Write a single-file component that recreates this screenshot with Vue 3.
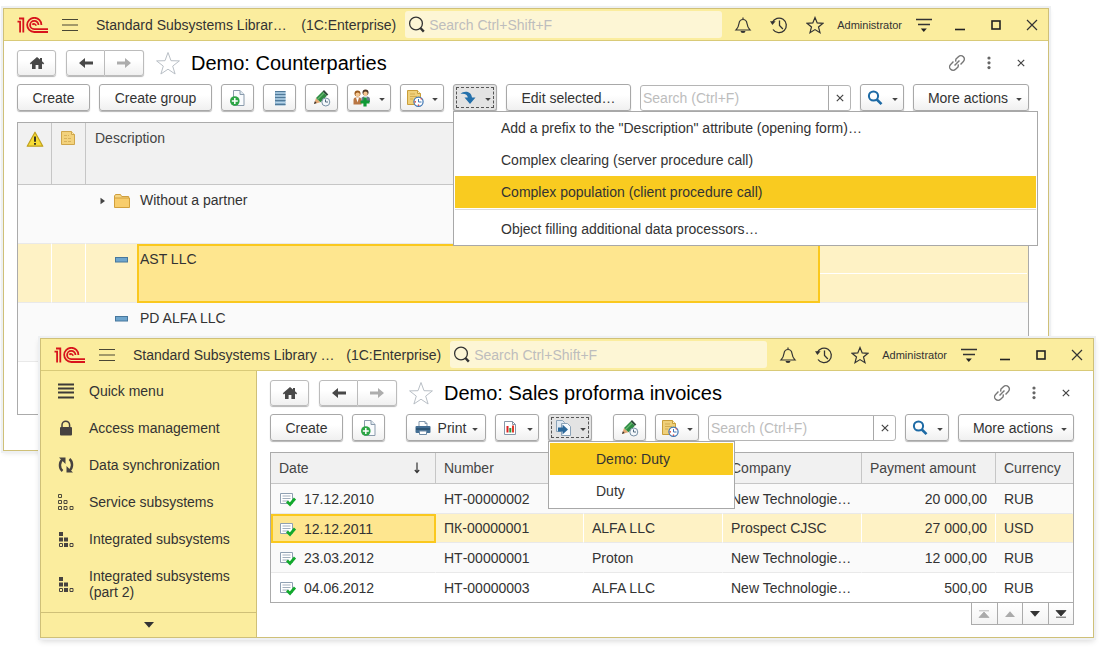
<script setup>
import { h } from 'vue'

const shapes = {
  logo: [32, 16, '<g fill="none" stroke="#d8141c" stroke-width="1.800"><path d="M.5 4.600h2.600V15.500M2 1.500h4.300V15.500"/><path d="M24.400 8a7.100 7.100 0 1 0-7.100 7H31M21.500 8a4.200 4.200 0 1 0-4.200 4.200H31M18.900 8.800a1.900 1.900 0 0 0-3.500-1"/></g>'],
  burger: [16, 14, '<path d="M0 1.500h16M0 7h16M0 12.500h16" stroke="#4a4735" stroke-width="1.2"/>'],
  lens: [18, 18, '<circle cx="8" cy="7.5" r="6.4" fill="none" stroke="#333" stroke-width="1.3"/><path d="M12.4 12l3.4 3.6" stroke="#333" stroke-width="2.4"/>'],
  bell: [18, 18, '<path d="M2 14h14c-2-2-2.6-3.400-3-6.500C12.600 4.500 11.200 3.500 9 3.500S5.400 4.500 5 7.500C4.600 10.600 4 12 2 14zM9 3.500V1.500" fill="none" stroke="#333" stroke-width="1.2"/><path d="M6.500 15h5a2.500 2 0 0 1-5 0z" fill="#333"/>'],
  history: [18, 18, '<path d="M2.300 6.500A7.300 7.300 0 1 1 3 13.500M9.500 4.500v5l3.400 3.500" fill="none" stroke="#333" stroke-width="1.3"/><path d="M0 5.200h5.600L2.400 9z" fill="#333"/>'],
  star: [18, 18, '<path d="M9 1.500l2.200 5.400 5.800.4-4.500 3.700 1.500 5.700L9 13.600l-5 3.100 1.500-5.700L1 7.300l5.800-.4z" fill="none" stroke="#333" stroke-width="1.200"/>'],
  settings: [16, 16, '<path d="M0 2.500h16M2 7.500h12" stroke="#333" stroke-width="1.300"/><path d="M4.800 11.500h6L7.800 15z" fill="#222"/>'],
  minimize: [12, 16, '<path d="M1 12.500h10" stroke="#222" stroke-width="1.600"/>'],
  maximize: [12, 12, '<rect x="2" y="2" width="8" height="8" fill="none" stroke="#222" stroke-width="1.600"/>'],
  close: [12, 12, '<path d="M1 1l10 10M11 1L1 11" stroke="#333" stroke-width="1.200"/>'],
  home: [16, 14, '<path d="M8 1L.8 7.200l1.100 1.300L3 7.600V13h3.600V9h2.800v4H13V7.600l1.100.9 1.100-1.300-2.200-1.900V2h-2v1.600z" fill="#484848"/>'],
  back: [16, 12, '<path d="M1 6l6-5v3.500h8v3H7V11z" fill="#484848"/>'],
  forward: [16, 12, '<path d="M15 6L9 1v3.500H1v3h8V11z" fill="#adadad"/>'],
  bigstar: [26, 24, '<path d="M13 1.500l3 8.200 8.400.200-6.700 5.200 2.400 7.900L13 18.200 5.900 23l2.400-7.900L1.600 9.900l8.400-.2z" fill="#fff" stroke="#b9bfc6" stroke-width="1"/>'],
  link: [18, 18, '<g fill="none" stroke="#777" stroke-width="1.400" transform="rotate(-45 9 9)"><path d="M7.500 5.500H3.500a3.500 3.500 0 0 0 0 7h3.500l2-1.500M10.500 12.500h4a3.500 3.500 0 0 0 0-7H11L9 7M5.500 9h7"/></g>'],
  dots: [6, 14, '<g fill="#666"><circle cx="3" cy="2" r="1.600"/><circle cx="3" cy="6.800" r="1.600"/><circle cx="3" cy="11.600" r="1.600"/></g>'],
  cross: [8, 8, '<path d="M.8.8l6.400 6.400M7.200.8L.8 7.200" stroke="#444" stroke-width="1.200"/>'],
  caret: [6, 8, '<path d="M.2 4h5.600L3 7z" fill="#444"/>'],
  addDoc: [18, 18, '<path d="M4.500 1.500h6.500l4 4v11H4.500z" fill="#f9fbfd" stroke="#8a9bac"/><path d="M11 1.500v4h4" fill="#dfe8f0" stroke="#8a9bac"/><circle cx="5.800" cy="12" r="4.800" fill="#2ba544"/><path d="M5.800 9v6M2.800 12h6" stroke="#fff" stroke-width="1.500"/>'],
  list: [18, 18, '<rect x="4" y="2" width="10.500" height="14.500" fill="#84acc9"/><path d="M4 2.500h10.500M4 5.500h10.500M4 8.500h10.500M4 11.500h10.500M4 15.500h10.500" stroke="#517a99"/><path d="M4.500 4h9.500M4.500 7h9.500M4.500 10h9.500M4.500 13.500h9.500" stroke="#b8d4e8"/>'],
  pencil: [18, 18, '<path d="M1 15l2-6 4.500 4.200z" fill="#e3a875"/><path d="M1 15l.9-2.700 1.800 1.700z" fill="#333"/><path d="M3 9L9.500 2.400l4.400 4.300L7.500 13.200z" fill="#2e8b43"/><path d="M9.500 2.400L11 1l4.300 4.400-1.400 1.300z" fill="#2f4a3a"/><path d="M4.500 10.500L11 4" stroke="#65b96f" stroke-width="1.300"/><circle cx="12.800" cy="13" r="4" fill="#f4f8fb" stroke="#7890a5"/><path d="M12.500 10.500V13h2.500" fill="none" stroke="#506a80"/>'],
  people: [18, 18, '<circle cx="4.500" cy="4.500" r="3" fill="#9a5a1e"/><circle cx="4.700" cy="5.600" r="2.200" fill="#f6c791"/><path d="M.5 15.500V11c0-2 1.500-2.700 4-2.700s4 .7 4 2.700v4.500z" fill="#b97643"/><path d="M3 8.500h3l-1.500 5z" fill="#fff"/><circle cx="12.500" cy="3.500" r="3" fill="#4a3324"/><circle cx="12.500" cy="4.800" r="2.200" fill="#f6c791"/><path d="M8.500 13V9.500c0-1.500 1.500-2 4-2s4.500.5 4.500 2.500V13z" fill="#6a7a8c"/><path d="M11 7.500h3l-1.500 4z" fill="#fff"/><path d="M12 8.500v9M7.500 13h9" stroke="#0f9a35" stroke-width="3.200"/>'],
  noteClock: [18, 18, '<path d="M1.500 1.500h10l3 3v11h-13z" fill="#efd07a" stroke="#c99e3a"/><path d="M11.500 1.500v3h3" fill="#fff0b8" stroke="#c99e3a"/><path d="M4 5h5M4 7.500h7M4 10h3" stroke="#d3ac50"/><circle cx="12.500" cy="12.800" r="4.600" fill="#fff" stroke="#3e76b4" stroke-width="1.200"/><path d="M12.500 10v3h3" fill="none" stroke="#3e76b4"/><path d="M8.500 12.800h1.500M12.500 16.800v-1.300M15.500 9.500l-.7.800" stroke="#d32f2f" stroke-width="1.300"/>'],
  turn: [18, 18, '<path d="M1.500 4.800C4.500 1.800 12 1.500 13 8.500h3.500L11 15 5.500 8.500h3.300C8.500 5.500 6 4.200 1.500 4.800z" fill="#2470ab"/>'],
  find: [18, 18, '<circle cx="7.500" cy="7" r="4.600" fill="none" stroke="#1d6aa5" stroke-width="2"/><path d="M10.800 10.500l4.700 4.700" stroke="#1d6aa5" stroke-width="2.600"/>'],
  print: [18, 18, '<path d="M5 2.500h6l2 2V8H5z" fill="#fff" stroke="#8499ad"/><path d="M11 2.500v2h2" fill="none" stroke="#8499ad"/><rect x="1.500" y="7" width="15" height="7" rx="1" fill="#446f94"/><path d="M2 10h14" stroke="#29506f" stroke-width="1.600"/><path d="M5.500 12h7v3.500h-7z" fill="#fff" stroke="#6d8aa5"/>'],
  chart: [18, 18, '<path d="M3.500 2.500h8l3 3v10h-11z" fill="#fff" stroke="#8797a8"/><path d="M11.500 2.500v3h3" fill="none" stroke="#8797a8"/><path d="M6.500 7v6.500" stroke="#d22" stroke-width="2"/><path d="M9.300 9v4.500" stroke="#2a9a45" stroke-width="2"/><path d="M12 6.500v7" stroke="#e03a2a" stroke-width="2"/>'],
  based: [18, 18, '<path d="M2.500 1.500h6l2 2v9h-8z" fill="#dfe9f2" stroke="#8ba3b8"/><path d="M7.500 4.500h6l3 3v9h-9z" fill="#f6fafd" stroke="#8ba3b8"/><path d="M4 8.500h4.500V5.500l5.500 5-5.500 5v-3H4z" fill="#2a689b"/>'],
  warn: [18, 18, '<path d="M9 2.200l7.800 14H1.200z" fill="#f6dc35" stroke="#c0a020" stroke-width="1.200" stroke-linejoin="round"/><path d="M9 6.500v5.200M9 13v1.800" stroke="#222" stroke-width="1.800"/>'],
  note: [16, 16, '<path d="M1.500 1.500h10l3 3v10h-13z" fill="#f3d27c" stroke="#cfa64c"/><path d="M11.500 1.500v3h3" fill="#fbe9b0" stroke="#cfa64c"/><path d="M4 5.500h5M4 8.500h8M4 11.500h8" stroke="#d8b25c" stroke-dasharray="3 1"/>'],
  expand: [6, 8, '<path d="M.5.800L5 4 .5 7.200z" fill="#444"/>'],
  folder: [18, 16, '<path d="M1.500 3l1-1.500h5l1.200 2h7v2H1.500z" fill="#f6d684" stroke="#cf9f3e"/><path d="M1.500 5h15v9.500h-15z" fill="#f8cd6c" stroke="#d2a03c"/>'],
  item: [16, 6, '<rect x=".5" y=".5" width="12" height="4.500" fill="#6ea5cd" stroke="#47779c"/>'],
  posted: [18, 16, '<path d="M1.500 2.500h12v10h-12z" fill="#fff" stroke="#8fa0b2"/><path d="M3.500 5h8M3.500 7.500h8M3.500 10h6" stroke="#a2afbd"/><path d="M8 10.500l3 3 5-6" fill="none" stroke="#12a92c" stroke-width="2.800"/>'],
  sort: [8, 12, '<path d="M4 .5v10M1.800 8L4 10.500 6.200 8" fill="none" stroke="#333" stroke-width="1.200"/>'],
  menu: [16, 16, '<path d="M0 1.500h16M0 5.500h16M0 9.500h16M0 14.500h16" stroke="#3d3a38" stroke-width="2"/>'],
  lock: [16, 16, '<path d="M4 8V5a3.800 3.800 0 0 1 7.600 0v3" fill="none" stroke="#464240" stroke-width="1.500"/><rect x="2" y="7" width="12" height="8.500" rx="1" fill="#464240"/>'],
  sync: [16, 16, '<path d="M5 2C1 5 1 11 4.500 14M11 14c4-3 4-9 .5-12" fill="none" stroke="#464240" stroke-width="2.400"/><path d="M1 .500h6.500V7zM15 15.500H8.500V9z" fill="#464240"/>'],
  boxes: [16, 16, '<g fill="none" stroke="#4d4a3c"><path d="M.5.500h3v3h-3zM.5 6.500h3v3h-3zM6 6.500h3v3H6zM.5 12.500h3v3h-3zM6 12.500h3v3H6zM12 12.500h3v3h-3z"/></g>'],
  filled: [16, 16, '<path d="M1 1h4v4H1zM1 6.500h4v4H1zM6 6.500h4v4H6zM6 12h4v4H6z" fill="#464240"/><path d="M1.500 12.500h3v3h-3zM12 12.500h3v3h-3z" fill="none" stroke="#464240"/>'],
  down: [12, 8, '<path d="M1 1h10L6 6.800z" fill="#333"/>'],
  up: [12, 8, '<path d="M1 7h10L6 1.200z" fill="#aaa"/>'],
  first: [12, 8, '<path d="M1 .800h10M1 7.500h10L6 2z" fill="#aaa" stroke="#aaa" stroke-width=".8"/>'],
  last: [12, 8, '<path d="M1 7.200h10M1 .500h10L6 6z" fill="#333" stroke="#333" stroke-width=".8"/>']
}

const Icon = ({ name }) => {
  const [w, ht, body] = shapes[name]
  return h('svg', { width: w, height: ht, viewBox: `0 0 ${w} ${ht}`, 'aria-hidden': 'true', innerHTML: body })
}
Icon.props = ['name']

const windows = [
  {
    id: 'counterparties',
    app: 'Standard Subsystems Librar…',
    heading: 'Demo: Counterparties',
    tools: [
      { label: 'Create', size: 'create' },
      { label: 'Create group', size: 'group' },
      { icon: 'addDoc', hint: 'Create by copying' },
      { icon: 'list', hint: 'List view' },
      { icon: 'pencil', hint: 'Edit' },
      { icon: 'people', caret: true, hint: 'Contacts' },
      { icon: 'noteClock', caret: true, hint: 'Reminders' },
      {
        icon: 'turn', caret: true, hint: 'Fill', active: true, menuClass: 'wide',
        menu: [
          { text: 'Add a prefix to the "Description" attribute (opening form)…' },
          { text: 'Complex clearing (server procedure call)' },
          { text: 'Complex population (client procedure call)', current: true },
          { text: 'Object filling additional data processors…', divided: true }
        ]
      },
      { label: 'Edit selected…', size: 'edit' }
    ]
  },
  {
    id: 'invoices',
    app: 'Standard Subsystems Library …',
    heading: 'Demo: Sales proforma invoices',
    tools: [
      { label: 'Create', size: 'create' },
      { icon: 'addDoc', hint: 'Create by copying' },
      { icon: 'print', label: 'Print', caret: true, size: 'print', lead: true },
      { icon: 'chart', caret: true, hint: 'Reports' },
      {
        icon: 'based', caret: true, hint: 'Create based on', active: true, menuClass: 'narrow',
        menu: [{ text: 'Demo: Duty', current: true }, { text: 'Duty' }]
      },
      { icon: 'pencil', hint: 'Edit', lead: true },
      { icon: 'noteClock', caret: true, hint: 'Reminders' }
    ]
  }
]

const sections = [
  { icon: 'menu', text: 'Quick menu' },
  { icon: 'lock', text: 'Access management' },
  { icon: 'sync', text: 'Data synchronization' },
  { icon: 'boxes', text: 'Service subsystems' },
  { icon: 'filled', text: 'Integrated subsystems' },
  { icon: 'filled', text: 'Integrated subsystems (part 2)' }
]

const invoices = [
  ['17.12.2010', 'НТ-00000002', '', 'New Technologie…', '20 000,00', 'RUB'],
  ['12.12.2011', 'ПК-00000001', 'ALFA LLC', 'Prospect CJSC', '27 000,00', 'USD'],
  ['23.03.2012', 'НТ-00000001', 'Proton', 'New Technologie…', '12 000,00', 'RUB'],
  ['04.06.2012', 'НТ-00000003', 'ALFA LLC', 'New Technologie…', '500,00', 'RUB']
]
</script>

<template>
  <div class="desktop">
    <section v-for="w in windows" :key="w.id" class="window" :class="w.id">
      <header class="titlebar">
        <Icon name="logo" />
        <button class="flat burger" aria-label="Main menu"><Icon name="burger" /></button>
        <span class="app-name">{{ w.app }}</span>
        <span class="platform">(1C:Enterprise)</span>
        <label class="global-search">
          <Icon name="lens" />
          <input type="text" placeholder="Search Ctrl+Shift+F" aria-label="Global search" />
        </label>
        <div class="title-actions">
          <button class="flat" aria-label="Notifications"><Icon name="bell" /></button>
          <button class="flat" aria-label="History"><Icon name="history" /></button>
          <button class="flat" aria-label="Favorites"><Icon name="star" /></button>
          <span class="user">Administrator</span>
          <button class="flat" aria-label="Settings"><Icon name="settings" /></button>
          <button class="flat" aria-label="Minimize"><Icon name="minimize" /></button>
          <button class="flat" aria-label="Maximize"><Icon name="maximize" /></button>
          <button class="flat" aria-label="Close window"><Icon name="close" /></button>
        </div>
      </header>

      <div class="body">
        <nav v-if="w.id === 'invoices'" class="sidebar">
          <ul>
            <li v-for="s in sections" :key="s.text">
              <a href="#"><Icon :name="s.icon" /><span>{{ s.text }}</span></a>
            </li>
          </ul>
          <button class="flat more" aria-label="Scroll down"><Icon name="down" /></button>
        </nav>

        <main class="content">
          <div class="navrow">
            <button class="btn home" aria-label="Home"><Icon name="home" /></button>
            <div class="pair">
              <button class="btn" aria-label="Back"><Icon name="back" /></button>
              <button class="btn" aria-label="Forward"><Icon name="forward" /></button>
            </div>
            <button class="flat fav" aria-label="Add to favorites"><Icon name="bigstar" /></button>
            <h1>{{ w.heading }}</h1>
            <div class="form-actions">
              <button class="flat" aria-label="Copy link"><Icon name="link" /></button>
              <button class="flat" aria-label="More"><Icon name="dots" /></button>
              <button class="flat dismiss" aria-label="Close form"><Icon name="cross" /></button>
            </div>
          </div>

          <div class="toolbar">
            <div v-for="(t, i) in w.tools" :key="i" class="tool" :class="{ lead: t.lead }">
              <button
                class="btn"
                :class="[t.size, { drop: t.caret && !t.label, square: !t.caret && !t.label, active: t.active }]"
                :aria-label="t.hint"
              >
                <Icon v-if="t.icon" :name="t.icon" />
                <span v-if="t.label">{{ t.label }}</span>
                <Icon v-if="t.caret" name="caret" />
              </button>
              <ul v-if="t.menu" class="menu" :class="t.menuClass">
                <li v-for="m in t.menu" :key="m.text" :class="{ divided: m.divided }">
                  <button :class="{ current: m.current }">{{ m.text }}</button>
                </li>
              </ul>
            </div>
            <div class="search">
              <input type="text" placeholder="Search (Ctrl+F)" aria-label="Search in list" />
              <button aria-label="Clear"><Icon name="cross" /></button>
            </div>
            <button class="btn drop" aria-label="Find"><Icon name="find" /><Icon name="caret" /></button>
            <button class="btn actions"><span>More actions</span><Icon name="caret" /></button>
          </div>

          <div v-if="w.id === 'counterparties'" class="grid tree">
            <table>
              <colgroup>
                <col class="c-flag" /><col class="c-note" /><col class="c-mark" /><col /><col class="c-extra" />
              </colgroup>
              <thead>
                <tr>
                  <th class="mid"><Icon name="warn" /></th>
                  <th class="mid"><Icon name="note" /></th>
                  <th colspan="2">Description</th>
                  <th></th>
                </tr>
              </thead>
              <tbody>
                <tr>
                  <td></td><td></td>
                  <td class="mark"><Icon name="expand" /><Icon name="folder" /></td>
                  <td class="name">Without a partner</td><td></td>
                </tr>
                <tr class="selected">
                  <td></td><td></td>
                  <td class="mark"><Icon name="item" /></td>
                  <td class="name focus">AST LLC</td>
                  <td class="halves"><div></div></td>
                </tr>
                <tr>
                  <td></td><td></td>
                  <td class="mark"><Icon name="item" /></td>
                  <td class="name">PD ALFA LLC</td><td></td>
                </tr>
              </tbody>
            </table>
          </div>

          <template v-else>
            <div class="grid flatlist">
              <table>
                <colgroup>
                  <col class="d1" /><col class="d2" /><col class="d3" /><col class="d3" /><col class="d5" /><col />
                </colgroup>
                <thead>
                  <tr>
                    <th><div class="date-head">Date<Icon name="sort" /></div></th>
                    <th>Number</th><th></th><th>Company</th><th>Payment amount</th><th>Currency</th>
                  </tr>
                </thead>
                <tbody>
                  <tr v-for="(r, i) in invoices" :key="r[0]" :class="{ selected: i === 1 }">
                    <td :class="{ focus: i === 1 }"><div class="date"><Icon name="posted" />{{ r[0] }}</div></td>
                    <td>{{ r[1] }}</td>
                    <td>{{ r[2] }}</td>
                    <td>{{ r[3] }}</td>
                    <td class="num">{{ r[4] }}</td>
                    <td>{{ r[5] }}</td>
                  </tr>
                </tbody>
              </table>
            </div>
            <div class="pager">
              <button aria-label="First" disabled><Icon name="first" /></button>
              <button aria-label="Previous" disabled><Icon name="up" /></button>
              <button aria-label="Next"><Icon name="down" /></button>
              <button aria-label="Last"><Icon name="last" /></button>
            </div>
          </template>
        </main>
      </div>
    </section>
  </div>
</template>

<style>
body {
  background: #fff;
}
</style>

<style scoped>
* {
  box-sizing: border-box;
}
.desktop {
  position: relative;
  min-height: 100vh;
  font: 14px/16px "Liberation Sans", Arial, sans-serif;
  color: #333;
}
button,
input {
  font: inherit;
  color: inherit;
  margin: 0;
  padding: 0;
}
svg {
  display: block;
  flex: none;
}
ul {
  list-style: none;
  margin: 0;
  padding: 0;
}
.window {
  position: absolute;
  background: #fff;
  border: 1px solid #cfc078;
}
.counterparties {
  left: 3px;
  right: 57px;
  top: 8px;
  box-shadow: 0 0 0 2px #eef0f2, 0 2px 5px rgba(0, 0, 0, 0.12);
}
.invoices {
  left: 40px;
  right: 12px;
  top: 338px;
  box-shadow: 0 0 0 2px #eef0f2, 0 3px 6px rgba(0, 0, 0, 0.16);
}
.flat {
  border: 0;
  background: none;
  display: flex;
  align-items: center;
  justify-content: center;
}

.titlebar {
  display: flex;
  align-items: center;
  height: 32px;
  padding: 0 1px 0 13px;
  background: #fbed9e;
  border-bottom: 1px solid #d9ca78;
}
.burger {
  margin: 0 18px 0 13px;
}
.app-name {
  flex: 1;
  min-width: 0;
  white-space: nowrap;
}
.platform {
  margin-right: 9px;
  white-space: nowrap;
}
.global-search {
  flex: 0 1 317px;
  height: 27px;
  display: flex;
  align-items: center;
  gap: 3px;
  padding-left: 3px;
  margin-right: 6px;
  background: #fdf6d5;
  border-radius: 3px;
}
input {
  min-width: 0;
  border: 0;
  outline: 0;
  background: none;
  flex: 1;
}
input::placeholder {
  color: #bdbdbd;
  opacity: 1;
}
.title-actions {
  display: flex;
  align-items: center;
  gap: 6px;
}
.title-actions .flat {
  width: 30px;
  height: 30px;
}
.user {
  padding: 0 1px;
  font-size: 11px;
  white-space: nowrap;
}

.body {
  display: flex;
}
.sidebar {
  width: 216px;
  flex: none;
  display: flex;
  flex-direction: column;
  background: #fbed9e;
  border-right: 1px solid #cfc078;
}
.sidebar ul {
  flex: 1;
  padding-top: 2px;
}
.sidebar a {
  display: flex;
  align-items: center;
  gap: 15px;
  padding: 10px 20px 11px 17px;
  color: #333;
  text-decoration: none;
}
.more {
  height: 25px;
  border-top: 1px solid #cfc078;
}
.content {
  flex: 1;
  min-width: 0;
  padding: 9px 19px 12px 13px;
}
.counterparties .content {
  padding-bottom: 35px;
}

.btn {
  height: 27px;
  display: flex;
  align-items: center;
  justify-content: center;
  border: 1px solid #a8a8a8;
  border-radius: 3px;
  background: linear-gradient(#fff 40%, #f0f0f0);
  box-shadow: 0 1px 1px #b5b5b5;
  white-space: nowrap;
}
.navrow {
  display: flex;
  align-items: center;
  height: 26px;
  margin-bottom: 8px;
}
.navrow .btn {
  height: 26px;
  width: 39px;
  border-color: #bcbcbc;
}
.pair {
  display: flex;
  margin-left: 10px;
}
.pair .btn:first-child {
  border-radius: 3px 0 0 3px;
}
.pair .btn:last-child {
  border-radius: 0 3px 3px 0;
  border-left: 0;
}
.fav {
  margin: 0 10px 0 11px;
}
h1 {
  flex: 1;
  margin: 0;
  font-size: 20px;
  line-height: 24px;
  font-weight: 400;
  color: #000;
  white-space: nowrap;
}
.form-actions {
  display: flex;
}
.form-actions .flat {
  width: 32px;
  height: 24px;
}
.form-actions .dismiss {
  width: 16px;
  margin-left: 8px;
}

.toolbar {
  display: flex;
  align-items: center;
  gap: 9px;
  margin-bottom: 11px;
}
.tool {
  position: relative;
}
.lead {
  margin-left: 12px;
}
.create {
  width: 73px;
}
.group {
  width: 113px;
}
.square {
  width: 33px;
}
.drop {
  width: 44px;
  gap: 8px;
}
.edit {
  width: 125px;
}
.print {
  width: 80px;
  gap: 6px;
}
.actions {
  width: 116px;
  gap: 8px;
  padding-left: 8px;
}
.active {
  background: #e3e3e3;
  outline: 1px dashed #555;
  outline-offset: -4px;
}
.search {
  flex: 1;
  min-width: 0;
  height: 26px;
  display: flex;
  border: 1px solid #b5b5b5;
  border-radius: 3px;
}
.search input {
  padding-left: 2px;
}
.search button {
  width: 22px;
  display: flex;
  align-items: center;
  justify-content: center;
  border: 0;
  border-left: 1px solid #a8a8a8;
  background: none;
}

.menu {
  position: absolute;
  z-index: 5;
  top: 100%;
  left: 0;
  background: #fff;
  border: 1px solid #a8a8a8;
  padding: 1px;
}
.menu button {
  display: block;
  width: 100%;
  height: 32px;
  border: 0;
  background: none;
  text-align: left;
  padding-left: 46px;
  white-space: nowrap;
}
.menu .current {
  background: #f9cb20;
}
.wide {
  width: 585px;
  padding: 0 1px;
}
.narrow {
  width: 187px;
}
.divided {
  border-top: 1px solid #dcdcdc;
  margin-top: 1px;
  padding-top: 3px;
}

.grid {
  border: 1px solid #ababab;
}
table {
  width: 100%;
  table-layout: fixed;
  border-collapse: separate;
  border-spacing: 0;
}
th,
td {
  padding: 0 8px;
  text-align: left;
  white-space: nowrap;
}
th {
  font-weight: 400;
  color: #444;
  background: #f1f1f1;
  border-bottom: 1px solid #c6c6c6;
  border-right: 1px solid #c6c6c6;
}
th:last-child {
  border-right: 0;
}
td {
  background: #fafafa;
  border-bottom: 1px solid #e9e9e9;
  border-right: 1px solid transparent;
}
.selected td {
  background: #fef2c5;
  border-right-color: #fff;
}
.selected td:last-child {
  border-right-color: transparent;
}
.selected td.focus {
  background: #fee68f;
  border: 2px solid #fac81e;
}

.tree {
  min-height: 293px;
}
.tree th {
  height: 62px;
}
.tree td {
  height: 59px;
}
.tree th,
.tree td {
  vertical-align: top;
  padding-top: 7px;
  padding-left: 9px;
}
.tree .mid {
  padding-left: 8px;
}
.c-flag,
.c-note {
  width: 34px;
}
.c-mark {
  width: 51px;
}
.c-extra {
  width: 208px;
}
.tree .mark {
  padding: 7px 6px 0 0;
  border-right: 0;
  text-align: right;
}
.mark svg {
  display: inline-block;
  vertical-align: middle;
  margin-left: 7px;
}
.tree .name {
  padding-left: 3px;
}
.tree .name.focus {
  padding: 5px 1px;
}
.tree .halves {
  padding: 0;
}
.halves div {
  height: 30px;
  border-bottom: 1px solid #fff;
}

.flatlist th {
  height: 31px;
}
.flatlist td {
  height: 29px;
}
.flatlist tr:nth-child(odd) td {
  height: 30px;
}
.flatlist tr:last-child td {
  background: #fff;
  border-bottom: 0;
}
.d1 {
  width: 165px;
}
.d2 {
  width: 148px;
}
.d3 {
  width: 139px;
}
.d5 {
  width: 134px;
}
.date,
.date-head {
  display: flex;
  align-items: center;
}
.date {
  gap: 7px;
}
.date-head {
  justify-content: space-between;
  padding-right: 6px;
}
td.focus .date {
  margin: 0 -2px;
}
.num {
  text-align: right;
}
.pager {
  width: 103px;
  height: 22px;
  margin-left: auto;
  display: flex;
  border: 1px solid #ababab;
  border-top: 0;
}
.pager button {
  flex: 1;
  display: flex;
  align-items: center;
  justify-content: center;
  border: 0;
  border-left: 1px solid #ababab;
  background: linear-gradient(#fff, #f3f3f3);
}
.pager button:first-child {
  border-left: 0;
}
</style>
